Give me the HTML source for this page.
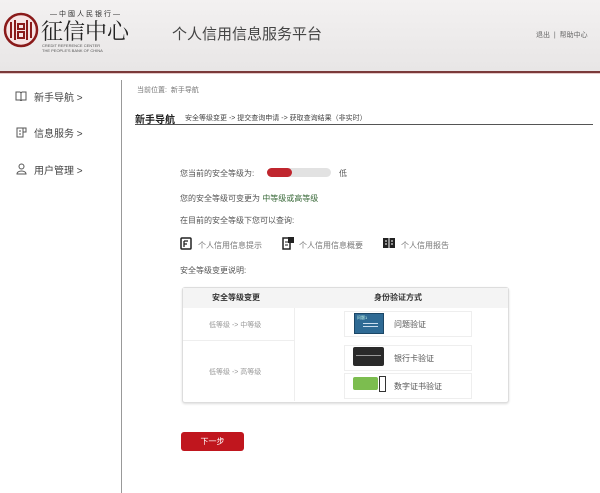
<!DOCTYPE html><html><head><meta charset="utf-8"><style>
body{margin:0;width:600px;height:493px;background:#fff;font-family:"Liberation Sans","Noto Sans CJK SC",sans-serif;position:relative;overflow:hidden;color:#333}
.a{position:absolute;white-space:nowrap}
.hdr{position:absolute;left:0;top:0;width:600px;height:71px;background:linear-gradient(#f3f1f1,#e8e6e6);border-bottom:2px solid #7a3a3a}
.hdr2{position:absolute;left:0;top:73px;width:600px;height:1px;background:#e6c9c9}
.f{font-size:8px;color:#555}
.td{font-size:7px;color:#999}
</style></head><body>
<div class="hdr"></div><div class="hdr2"></div>
<svg class="a" style="left:3px;top:12px" width="36" height="36" viewBox="0 0 36 36"><circle cx="18" cy="18" r="16" fill="#f6e4e4" stroke="#8a1a1a" stroke-width="2.5"/><path d="M8 10v16M12 8v20M24 8v20M28 10v16M15 12h6v5h-6zM15 20h6v6h-6z" stroke="#8a1a1a" stroke-width="2" fill="none"/></svg>
<div class="a" style="left:50px;top:9px;font-size:7px;color:#333;letter-spacing:2px">—中國人民银行—</div>
<div class="a" style="left:41px;top:15px;font-size:22px;color:#222;font-family:'Noto Serif CJK SC',serif">征信中心</div>
<div class="a" style="left:42px;top:43px;font-size:4px;color:#555;line-height:5px">CREDIT REFERENCE CENTER<br>THE PEOPLE'S BANK OF CHINA</div>
<div class="a" style="left:172px;top:23px;font-size:15px;color:#444">个人信用信息服务平台</div>
<div class="a" style="left:536px;top:30px;font-size:7px;color:#666">退出 &nbsp;| &nbsp;帮助中心</div>
<div class="a" style="left:121px;top:80px;width:1px;height:413px;background:#999"></div>
<svg class="a" style="left:15px;top:91px" width="12" height="10"><path d="M1 1h4l1 1 1-1h4v8H7l-1 1-1-1H1z M6 2v7" stroke="#555" fill="none"/></svg>
<div class="a" style="left:34px;top:89px;font-size:10px;color:#444">新手导航 &gt;</div>
<svg class="a" style="left:16px;top:126px" width="11" height="12"><path d="M1 2h6v9H1z M7 2h3v4H7 M3 5h2M3 8h2" stroke="#555" fill="none"/></svg>
<div class="a" style="left:34px;top:125px;font-size:10px;color:#444">信息服务 &gt;</div>
<svg class="a" style="left:16px;top:163px" width="11" height="12"><circle cx="5.5" cy="3.5" r="2.5" stroke="#555" fill="none"/><path d="M1 11c0-4 9-4 9 0z" stroke="#555" fill="none"/></svg>
<div class="a" style="left:34px;top:162px;font-size:10px;color:#444">用户管理 &gt;</div>
<div class="a" style="left:137px;top:85px;font-size:7px;color:#777">当前位置: &nbsp;新手导航</div>
<div class="a" style="left:135px;top:111px;font-size:10px;color:#222;font-weight:bold">新手导航</div>
<div class="a" style="left:185px;top:113px;font-size:7px;color:#444">安全等级变更 -&gt; 提交查询申请 -&gt; 获取查询结果（非实时）</div>
<div class="a" style="left:135px;top:124px;width:458px;height:1px;background:#555"></div>
<div class="a f" style="left:180px;top:168px">您当前的安全等级为:</div>
<div class="a" style="left:267px;top:168px;width:64px;height:9px;border-radius:5px;background:#e2e2e2"></div>
<div class="a" style="left:267px;top:168px;width:25px;height:9px;border-radius:5px;background:#c0262e"></div>
<div class="a f" style="left:339px;top:168px">低</div>
<div class="a f" style="left:180px;top:193px">您的安全等级可变更为 <span style="color:#3a6a3a">中等级或高等级</span></div>
<div class="a f" style="left:180px;top:215px">在目前的安全等级下您可以查询:</div>
<svg class="a" style="left:180px;top:237px" width="12" height="13"><rect x="1" y="1" width="10" height="11" rx="1" stroke="#222" stroke-width="1.5" fill="none"/><path d="M4 4h4M4 4v6M4 7h3" stroke="#222" stroke-width="1.3"/></svg>
<div class="a f" style="left:198px;top:240px;color:#777">个人信用信息提示</div>
<svg class="a" style="left:282px;top:236px" width="13" height="14"><rect x="1" y="2" width="7" height="11" stroke="#222" stroke-width="1.5" fill="none"/><rect x="6" y="1" width="6" height="6" fill="#222"/><path d="M3 6h3M3 9h3" stroke="#222"/></svg>
<div class="a f" style="left:299px;top:240px;color:#777">个人信用信息概要</div>
<svg class="a" style="left:382px;top:237px" width="14" height="12"><rect x="1" y="1" width="12" height="10" fill="#222"/><path d="M7 1v10M3 4h2M3 7h2M9 4h2M9 7h2" stroke="#fff"/></svg>
<div class="a f" style="left:401px;top:240px;color:#777">个人信用报告</div>
<div class="a f" style="left:180px;top:265px">安全等级变更说明:</div>
<div class="a" style="left:182px;top:287px;width:325px;height:114px;border:1px solid #ddd;border-radius:3px;background:#fff;box-shadow:0 1px 2px #ddd"></div>
<div class="a" style="left:183px;top:288px;width:325px;height:20px;background:#f4f4f4"></div>
<div class="a" style="left:294px;top:308px;width:1px;height:93px;background:#eee"></div>
<div class="a" style="left:183px;top:340px;width:111px;height:1px;background:#eee"></div>
<div class="a" style="left:212px;top:292px;font-size:8px;color:#333;font-weight:bold">安全等级变更</div>
<div class="a" style="left:374px;top:292px;font-size:8px;color:#333;font-weight:bold">身份验证方式</div>
<div class="a td" style="left:209px;top:320px">低等级 -&gt; 中等级</div>
<div class="a td" style="left:209px;top:367px">低等级 -&gt; 高等级</div>
<div class="a" style="left:344px;top:311px;width:126px;height:24px;border:1px solid #eee"></div>
<div class="a" style="left:344px;top:345px;width:126px;height:24px;border:1px solid #eee"></div>
<div class="a" style="left:344px;top:373px;width:126px;height:24px;border:1px solid #eee"></div>
<div class="a" style="left:354px;top:313px;width:28px;height:19px;background:#2f6a94;border:1px solid #1c4766"></div>
<div class="a" style="left:357px;top:315px;font-size:4px;color:#cfe">问题1</div>
<div class="a" style="left:363px;top:323px;width:15px;height:1px;background:#cde"></div>
<div class="a" style="left:363px;top:326px;width:15px;height:1px;background:#cde"></div>
<div class="a" style="left:353px;top:347px;width:31px;height:19px;background:#2a2a2a;border-radius:2px"></div>
<div class="a" style="left:356px;top:355px;width:25px;height:1px;background:#999"></div>
<div class="a" style="left:353px;top:377px;width:25px;height:13px;background:#7cbd4f;border-radius:2px"></div>
<div class="a" style="left:379px;top:376px;width:5px;height:14px;border:1px solid #333;background:#fff"></div>
<div class="a f" style="left:394px;top:319px;color:#555">问题验证</div>
<div class="a f" style="left:394px;top:353px;color:#555">银行卡验证</div>
<div class="a f" style="left:394px;top:381px;color:#555">数字证书验证</div>
<div class="a" style="left:181px;top:432px;width:63px;height:19px;background:#c0161e;border-radius:3px;color:#fff;font-size:8px;text-align:center;line-height:19px">下一步</div>
</body></html>
